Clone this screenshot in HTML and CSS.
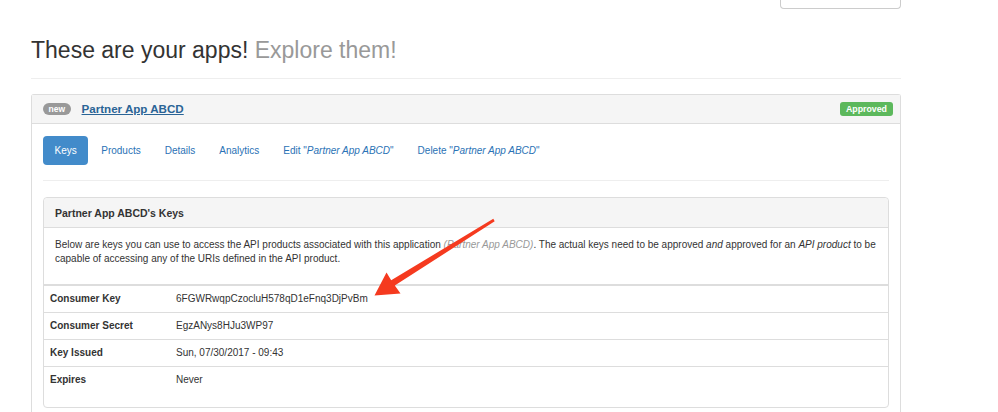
FILE: index.html
```html
<!DOCTYPE html>
<html>
<head>
<meta charset="utf-8">
<link rel="stylesheet" href="styles.css">
</head>
<body>
<div class="topbar"><div class="topbox"></div></div>
<div class="container">
  <div class="page-header">
    <h1>These are your apps! <small>Explore them!</small></h1>
  </div>
  <div class="panel app">
    <div class="panel-heading">
      <span class="badge">new</span>
      <a class="app-title" href="#">Partner App ABCD</a>
      <span class="label-approved">Approved</span>
    </div>
    <div class="panel-body">
      <ul class="pills">
        <li><a class="active" href="#">Keys</a></li>
        <li><a href="#">Products</a></li>
        <li><a href="#">Details</a></li>
        <li><a href="#">Analytics</a></li>
        <li><a href="#">Edit "<em>Partner App ABCD</em>"</a></li>
        <li><a href="#">Delete "<em>Partner App ABCD</em>"</a></li>
      </ul>
      <div class="tab-content">
        <div class="keys">
          <div class="keys-heading">Partner App ABCD's Keys</div>
          <div class="keys-body">
            <p>Below are keys you can use to access the API products associated with this application <em class="muted">(Partner App ABCD)</em>. The actual keys need to be approved <em>and</em> approved for an <em>API product</em> to be capable of accessing any of the URIs defined in the API product.</p>
          </div>
          <table class="keys-table">
            <colgroup><col class="c1"><col></colgroup>
            <tr><td class="lbl">Consumer Key</td><td>6FGWRwqpCzocluH578qD1eFnq3DjPvBm</td></tr>
            <tr><td class="lbl">Consumer Secret</td><td>EgzANys8HJu3WP97</td></tr>
            <tr><td class="lbl">Key Issued</td><td>Sun, 07/30/2017 - 09:43</td></tr>
            <tr><td class="lbl">Expires</td><td>Never</td></tr>
          </table>
        </div>
      </div>
    </div>
  </div>
</div>
<svg class="arrow" width="998" height="412" viewBox="0 0 998 412">
  <polygon points="493.3,218.8 494.7,221.2 394.8,285.6 400.5,293.5 374.5,295.5 386.5,272.5 391.2,280.2" fill="#f53a1f"/>
</svg>
</body>
</html>
```
FILE: styles.css
```css
html, body {
  margin: 0;
  padding: 0;
  background: #fff;
}
body {
  font-family: "Liberation Sans", Arial, Helvetica, sans-serif;
  color: #333;
  font-size: 10px;
  line-height: 14px;
  height: 412px;
  overflow: hidden;
}
.topbar {
  height: 9px;
  display: flex;
  justify-content: flex-end;
  padding-right: 97px;
}
.topbox {
  width: 119px;
  height: 8px;
  border: 1px solid #ccc;
  border-top: none;
  border-radius: 0 0 4px 4px;
}
.container {
  padding: 0 97px 0 31px;
}
.page-header {
  padding: 28px 0 15px;
  border-bottom: 1px solid #eee;
}
.page-header h1 {
  margin: 0;
  font-size: 23px;
  line-height: 26px;
  font-weight: normal;
  color: #333;
}
.page-header small {
  font-size: 23px;
  color: #999;
}
.panel {
  margin-top: 15px;
  border: 1px solid #ddd;
  border-bottom: none;
  border-radius: 3px 3px 0 0;
  height: 317px;
}
.panel-heading {
  height: 28px;
  background: #f5f5f5;
  border-bottom: 1px solid #ddd;
  display: flex;
  align-items: center;
  padding: 0 7px 0 11px;
}
.badge {
  background: #999;
  color: #fff;
  font-weight: bold;
  font-size: 8.5px;
  line-height: 12px;
  padding: 0 5.5px;
  border-radius: 6px;
}
.app-title {
  margin-left: 11px;
  font-size: 11.6px;
  font-weight: bold;
  color: #2a6496;
  text-decoration: underline;
}
.label-approved {
  margin-left: auto;
  background: #5cb85c;
  color: #fff;
  font-weight: bold;
  font-size: 8.8px;
  line-height: 14px;
  padding: 0 6px;
  border-radius: 3px;
}
.panel-body {
  padding: 12px 11px 0;
}
.pills {
  list-style: none;
  margin: 0;
  padding: 0;
  display: flex;
  gap: 2px;
}
.pills a {
  display: block;
  padding: 7.5px 11px;
  font-size: 10px;
  line-height: 14px;
  color: #2a72b5;
  text-decoration: none;
  border-radius: 4px;
}
.pills a.active {
  background: #428bca;
  color: #fff;
  padding: 7.5px 11.5px;
}
.tab-content {
  margin-top: 15px;
  border-top: 1px solid #eee;
  padding-top: 16px;
}
.keys {
  border: 1px solid #ddd;
  border-radius: 4px;
}
.keys-heading {
  height: 29px;
  display: flex;
  align-items: center;
  padding-left: 11px;
  background: #f5f5f5;
  border-bottom: 1px solid #ddd;
  border-radius: 4px 4px 0 0;
  font-weight: bold;
  font-size: 10.5px;
  color: #333;
}
.keys-body {
  padding: 9.5px 12px 18.5px 11px;
  border-bottom: 1px solid #ddd;
}
.keys-body p {
  margin: 0;
}
.muted {
  color: #999;
}
.keys-table {
  width: 100%;
  border-collapse: collapse;
  table-layout: fixed;
  margin-bottom: 14px;
}
.keys-table col.c1 {
  width: 126px;
}
.keys-table td {
  border-top: 1px solid #ddd;
  padding: 6px 6px;
  line-height: 14px;
  font-size: 10px;
  vertical-align: top;
}
.keys-table td.lbl {
  font-weight: bold;
}
.arrow {
  position: absolute;
  left: 0;
  top: 0;
  pointer-events: none;
}
```
